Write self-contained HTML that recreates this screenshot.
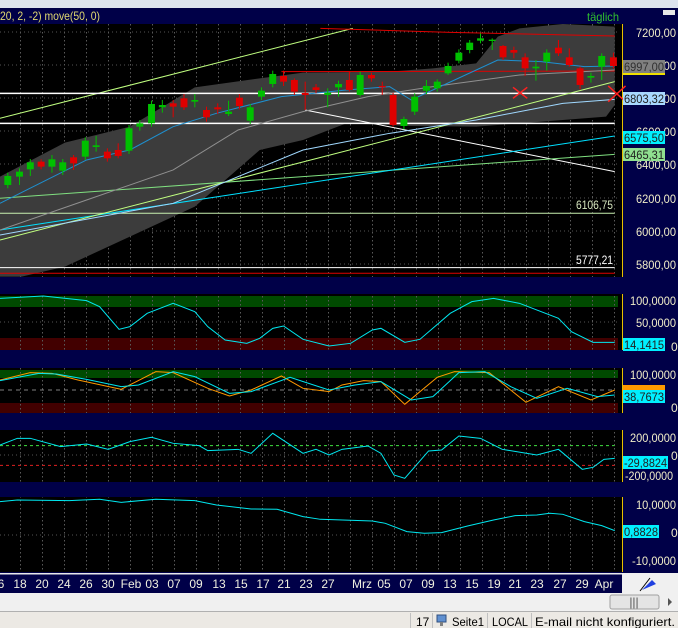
<!DOCTYPE html>
<html><head><meta charset="utf-8"><style>
html,body{margin:0;padding:0;width:678px;height:628px;overflow:hidden;background:#000048}
svg{display:block}
text{font-family:"Liberation Sans Narrow","Liberation Sans",sans-serif;font-size:12px}
</style></head><body>
<svg width="678" height="628" viewBox="0 0 678 628" xmlns="http://www.w3.org/2000/svg">
<defs>
<pattern id="vg" width="22" height="4" patternUnits="userSpaceOnUse" x="20"><rect x="0" y="0" width="1" height="1.5" fill="#5a5a5a"/></pattern>
</defs>
<rect x="0" y="0" width="678" height="8" fill="#dde4ee"/>
<rect x="0" y="8" width="678" height="565" fill="#000048"/>
<text x="0" y="20" fill="#e0d870" font-size="13" textLength="100" lengthAdjust="spacingAndGlyphs">20, 2, -2) move(50, 0)</text>
<text x="587" y="21" fill="#30c030" font-size="12" textLength="32" lengthAdjust="spacingAndGlyphs">täglich</text>
<rect x="663" y="10" width="12" height="5" fill="#e8e8e8"/>

<rect x="0" y="24" width="622" height="253" fill="#000"/>
<rect x="0" y="294" width="622" height="56" fill="#000"/>
<rect x="0" y="368" width="622" height="45" fill="#000"/>
<rect x="0" y="430" width="622" height="52" fill="#000"/>
<rect x="0" y="497" width="622" height="75" fill="#000"/>
<rect x="0" y="296" width="618" height="11" fill="#004a00"/>
<rect x="0" y="338" width="618" height="12" fill="#420000"/>
<rect x="0" y="370" width="618" height="8" fill="#004a00"/>
<rect x="0" y="403" width="618" height="10" fill="#420000"/>

<g stroke="#e8c000" stroke-width="1">
<line x1="622.5" y1="24" x2="622.5" y2="277"/>
<line x1="622.5" y1="294" x2="622.5" y2="350"/>
<line x1="622.5" y1="368" x2="622.5" y2="413"/>
<line x1="622.5" y1="430" x2="622.5" y2="482"/>
<line x1="622.5" y1="497" x2="622.5" y2="572"/>
</g>

<rect x="0" y="24" width="620" height="253" fill="url(#vg)"/>
<rect x="0" y="294" width="620" height="56" fill="url(#vg)"/>
<rect x="0" y="368" width="620" height="45" fill="url(#vg)"/>
<rect x="0" y="430" width="620" height="52" fill="url(#vg)"/>
<rect x="0" y="497" width="620" height="75" fill="url(#vg)"/>
<g stroke="#555" stroke-dasharray="1,3">
<line x1="0" y1="32" x2="620" y2="32"/><line x1="0" y1="65" x2="620" y2="65"/>
<line x1="0" y1="98" x2="620" y2="98"/><line x1="0" y1="131" x2="620" y2="131"/>
<line x1="0" y1="164" x2="620" y2="164"/><line x1="0" y1="198" x2="620" y2="198"/>
<line x1="0" y1="231" x2="620" y2="231"/><line x1="0" y1="264" x2="620" y2="264"/>
<line x1="0" y1="322" x2="620" y2="322"/>
<line x1="0" y1="455" x2="620" y2="455"/>
<line x1="0" y1="535" x2="620" y2="535"/>
</g>

<g transform="scale(0.4329,0.3333)" fill="none">
<polygon fill="#3c3c3c" points="0,530 150,428 300,380 450,262 600,235 700,218 900,215 1000,205 1100,190 1150,110 1200,85 1300,72 1420,80 1420,315 1400,350 1200,370 1100,380 950,378 800,370 700,420 600,450 450,620 300,710 150,800 50,830 0,830"/>
<g stroke-width="1">
<polyline vector-effect="non-scaling-stroke" stroke="#c0ff80" points="0,355 815,85"/>
<polyline vector-effect="non-scaling-stroke" stroke="#e00000" points="740,85 1040,97 1420,108"/>
<polyline vector-effect="non-scaling-stroke" stroke="#e00000" points="650,215 1420,213"/>
<polyline vector-effect="non-scaling-stroke" stroke="#ffffff" stroke-width="1.5" points="0,280 1420,280"/>
<polyline vector-effect="non-scaling-stroke" stroke="#ffffff" stroke-width="1.5" points="0,370 1420,370"/>
<polyline vector-effect="non-scaling-stroke" stroke="#ffffff" points="0,803 1420,803"/>
<polyline vector-effect="non-scaling-stroke" stroke="#e00000" points="0,820 1420,820"/>
<polyline vector-effect="non-scaling-stroke" stroke="#c8f0b0" points="0,640 1420,640"/>
<polyline vector-effect="non-scaling-stroke" stroke="#ffffff" points="705,330 1420,515"/>
<polyline vector-effect="non-scaling-stroke" stroke="#80e080" points="0,595 1420,463"/>
<polyline vector-effect="non-scaling-stroke" stroke="#00e0ff" points="0,690 1420,408"/>
<polyline vector-effect="non-scaling-stroke" stroke="#c0ff80" points="0,720 1420,245"/>
<polyline vector-effect="non-scaling-stroke" stroke="#a0d8ff" points="0,705 400,610 700,450 900,400 1100,360 1300,310 1420,298"/>
<polyline vector-effect="non-scaling-stroke" stroke="#909090" points="0,690 200,600 400,510 550,390 700,335 850,290 1000,260 1200,225 1420,210"/>
<polyline vector-effect="non-scaling-stroke" stroke="#1e90d0" points="0,610 200,480 300,450 400,380 500,340 650,290 800,270 900,260 950,300 1050,240 1150,180 1250,185 1350,200 1420,198"/>
<g stroke="#ff2020" stroke-width="1.5">
<polyline vector-effect="non-scaling-stroke" points="1185,262 1218,295"/><polyline vector-effect="non-scaling-stroke" points="1185,295 1218,262"/>
<polyline vector-effect="non-scaling-stroke" points="1405,258 1445,305"/><polyline vector-effect="non-scaling-stroke" points="1405,305 1445,258"/>
</g>
</g>
<g stroke-width="1">
<g stroke="#00c000">
<polyline vector-effect="non-scaling-stroke" points="18,518 18,565"/><polyline vector-effect="non-scaling-stroke" points="45,505 45,555"/><polyline vector-effect="non-scaling-stroke" points="70,477 70,528"/><polyline vector-effect="non-scaling-stroke" points="120,465 120,518"/><polyline vector-effect="non-scaling-stroke" points="145,477 145,525"/><polyline vector-effect="non-scaling-stroke" points="197,412 197,480"/><polyline vector-effect="non-scaling-stroke" points="222,408 222,455"/><polyline vector-effect="non-scaling-stroke" points="298,375 298,462"/><polyline vector-effect="non-scaling-stroke" points="323,360 323,392"/><polyline vector-effect="non-scaling-stroke" points="350,302 350,380"/><polyline vector-effect="non-scaling-stroke" points="375,300 375,338"/><polyline vector-effect="non-scaling-stroke" points="450,282 450,322"/><polyline vector-effect="non-scaling-stroke" points="528,302 528,348"/><polyline vector-effect="non-scaling-stroke" points="578,312 578,372"/><polyline vector-effect="non-scaling-stroke" points="604,262 604,300"/><polyline vector-effect="non-scaling-stroke" points="630,212 630,262"/><polyline vector-effect="non-scaling-stroke" points="757,265 757,322"/><polyline vector-effect="non-scaling-stroke" points="782,242 782,290"/><polyline vector-effect="non-scaling-stroke" points="832,215 832,290"/><polyline vector-effect="non-scaling-stroke" points="933,350 933,388"/><polyline vector-effect="non-scaling-stroke" points="958,280 958,345"/><polyline vector-effect="non-scaling-stroke" points="985,240 985,282"/><polyline vector-effect="non-scaling-stroke" points="1010,238 1010,275"/><polyline vector-effect="non-scaling-stroke" points="1035,188 1035,225"/><polyline vector-effect="non-scaling-stroke" points="1060,148 1060,190"/><polyline vector-effect="non-scaling-stroke" points="1085,120 1085,160"/><polyline vector-effect="non-scaling-stroke" points="1110,100 1110,130"/><polyline vector-effect="non-scaling-stroke" points="1137,115 1137,150"/><polyline vector-effect="non-scaling-stroke" points="1238,180 1238,242"/><polyline vector-effect="non-scaling-stroke" points="1263,148 1263,212"/><polyline vector-effect="non-scaling-stroke" points="1365,218 1365,248"/><polyline vector-effect="non-scaling-stroke" points="1390,160 1390,240"/>
</g>
<g stroke="#e00000">
<polyline vector-effect="non-scaling-stroke" points="95,478 95,508"/><polyline vector-effect="non-scaling-stroke" points="170,465 170,510"/><polyline vector-effect="non-scaling-stroke" points="248,445 248,485"/><polyline vector-effect="non-scaling-stroke" points="273,430 273,475"/><polyline vector-effect="non-scaling-stroke" points="400,300 400,352"/><polyline vector-effect="non-scaling-stroke" points="425,282 425,330"/><polyline vector-effect="non-scaling-stroke" points="477,320 477,365"/><polyline vector-effect="non-scaling-stroke" points="503,310 503,342"/><polyline vector-effect="non-scaling-stroke" points="553,282 553,328"/><polyline vector-effect="non-scaling-stroke" points="655,212 655,258"/><polyline vector-effect="non-scaling-stroke" points="680,235 680,285"/><polyline vector-effect="non-scaling-stroke" points="705,245 705,330"/><polyline vector-effect="non-scaling-stroke" points="730,252 730,280"/><polyline vector-effect="non-scaling-stroke" points="807,215 807,275"/><polyline vector-effect="non-scaling-stroke" points="858,218 858,245"/><polyline vector-effect="non-scaling-stroke" points="883,245 883,285"/><polyline vector-effect="non-scaling-stroke" points="908,278 908,380"/><polyline vector-effect="non-scaling-stroke" points="1162,135 1162,180"/><polyline vector-effect="non-scaling-stroke" points="1187,140 1187,175"/><polyline vector-effect="non-scaling-stroke" points="1213,160 1213,228"/><polyline vector-effect="non-scaling-stroke" points="1290,120 1290,168"/><polyline vector-effect="non-scaling-stroke" points="1315,145 1315,200"/><polyline vector-effect="non-scaling-stroke" points="1340,200 1340,268"/><polyline vector-effect="non-scaling-stroke" points="1417,158 1417,205"/>
</g>
</g>
<g fill="#00c000">
<rect x="10" y="528" width="16" height="27"/><rect x="37" y="515" width="16" height="15"/><rect x="62" y="487" width="16" height="21"/><rect x="112" y="478" width="16" height="22"/><rect x="137" y="487" width="16" height="25"/><rect x="189" y="422" width="16" height="48"/><rect x="214" y="436" width="16" height="5"/><rect x="290" y="385" width="16" height="67"/><rect x="315" y="370" width="16" height="10"/><rect x="342" y="312" width="16" height="58"/><rect x="367" y="315" width="16" height="7"/><rect x="442" y="300" width="16" height="5"/><rect x="520" y="335" width="16" height="7"/><rect x="570" y="322" width="16" height="40"/><rect x="596" y="272" width="16" height="18"/><rect x="622" y="222" width="16" height="30"/><rect x="749" y="278" width="16" height="7"/><rect x="774" y="252" width="16" height="10"/><rect x="824" y="225" width="16" height="60"/><rect x="925" y="357" width="16" height="21"/><rect x="950" y="290" width="16" height="45"/><rect x="977" y="258" width="16" height="14"/><rect x="1002" y="245" width="16" height="20"/><rect x="1027" y="198" width="16" height="22"/><rect x="1052" y="158" width="16" height="24"/><rect x="1077" y="128" width="16" height="22"/><rect x="1102" y="115" width="16" height="7"/><rect x="1129" y="119" width="16" height="4"/><rect x="1230" y="200" width="16" height="5"/><rect x="1255" y="158" width="16" height="27"/><rect x="1357" y="228" width="16" height="5"/><rect x="1382" y="168" width="16" height="32"/>
</g>
<g fill="#e00000">
<rect x="87" y="485" width="16" height="15"/><rect x="162" y="472" width="16" height="18"/><rect x="240" y="455" width="16" height="20"/><rect x="265" y="450" width="16" height="18"/><rect x="392" y="310" width="16" height="10"/><rect x="417" y="295" width="16" height="27"/><rect x="469" y="330" width="16" height="22"/><rect x="495" y="322" width="16" height="6"/><rect x="545" y="293" width="16" height="25"/><rect x="647" y="228" width="16" height="17"/><rect x="672" y="240" width="16" height="35"/><rect x="697" y="279" width="16" height="6"/><rect x="722" y="262" width="16" height="8"/><rect x="799" y="240" width="16" height="30"/><rect x="850" y="225" width="16" height="10"/><rect x="875" y="258" width="16" height="4"/><rect x="900" y="285" width="16" height="90"/><rect x="1154" y="138" width="16" height="34"/><rect x="1179" y="150" width="16" height="8"/><rect x="1205" y="172" width="16" height="33"/><rect x="1282" y="143" width="16" height="17"/><rect x="1307" y="172" width="16" height="23"/><rect x="1332" y="205" width="16" height="50"/><rect x="1409" y="172" width="16" height="26"/>
</g>
</g>
<text x="576" y="209" fill="#d8e8c0" textLength="37" lengthAdjust="spacingAndGlyphs">6106,75</text>
<text x="576" y="264" fill="#ffffff" textLength="37" lengthAdjust="spacingAndGlyphs">5777,21</text>

<g transform="translate(0,290) scale(0.4329,0.3333)" fill="none" stroke-width="1">
<polyline vector-effect="non-scaling-stroke" stroke="#00e8f0" points="0,25 100,18 200,32 230,50 275,118 300,110 340,70 400,40 450,65 480,110 520,150 570,160 600,145 630,115 655,108 700,148 760,168 810,160 860,120 880,115 935,157 970,148 1040,70 1090,35 1140,25 1200,40 1290,85 1320,125 1370,157 1420,157"/>
<polyline vector-effect="non-scaling-stroke" stroke="#808080" stroke-dasharray="4,4" points="0,300 1420,300"/>
<polyline vector-effect="non-scaling-stroke" stroke="#ff9900" points="0,270 70,248 120,250 180,270 280,298 360,245 400,248 480,295 530,318 580,300 650,258 700,295 760,305 790,285 840,272 880,275 935,343 1010,262 1050,245 1130,248 1215,337 1290,290 1365,330 1420,300"/>
<polyline vector-effect="non-scaling-stroke" stroke="#00e8f0" points="0,272 90,250 130,252 200,268 280,290 320,285 400,245 450,260 530,310 580,305 670,262 760,300 820,285 880,275 950,330 1000,320 1060,248 1120,245 1180,290 1240,325 1310,295 1380,320 1420,315"/>
<polyline vector-effect="non-scaling-stroke" stroke="#40e040" stroke-dasharray="3,3" points="0,467 1420,467"/>
<polyline vector-effect="non-scaling-stroke" stroke="#e02020" stroke-dasharray="3,3" points="0,526 1420,526"/>
<polyline vector-effect="non-scaling-stroke" stroke="#00e8f0" points="0,465 40,445 70,445 140,470 200,462 250,478 300,455 350,442 400,460 460,467 480,482 550,478 580,490 630,430 700,490 730,478 760,495 790,478 850,468 880,490 910,555 935,565 990,483 1020,480 1060,438 1110,445 1160,478 1240,495 1290,478 1345,538 1370,532 1395,508 1420,505"/>
<polyline vector-effect="non-scaling-stroke" stroke="#00e8f0" points="0,635 40,630 160,632 230,628 280,637 360,628 450,632 500,645 580,657 640,658 700,680 740,688 860,693 890,700 940,725 980,730 1020,728 1080,708 1140,690 1190,677 1240,675 1270,670 1300,673 1350,695 1390,707 1420,722"/>
</g>

<g fill="#f0ecc8" font-size="13">
<text x="636" y="37" textLength="40" lengthAdjust="spacingAndGlyphs">7200,00</text>
<text x="636" y="70" textLength="40" lengthAdjust="spacingAndGlyphs">7000,00</text>
<text x="636" y="103" textLength="40" lengthAdjust="spacingAndGlyphs">6800,00</text>
<text x="636" y="136" textLength="40" lengthAdjust="spacingAndGlyphs">6600,00</text>
<text x="636" y="169" textLength="40" lengthAdjust="spacingAndGlyphs">6400,00</text>
<text x="636" y="203" textLength="40" lengthAdjust="spacingAndGlyphs">6200,00</text>
<text x="636" y="236" textLength="40" lengthAdjust="spacingAndGlyphs">6000,00</text>
<text x="636" y="269" textLength="40" lengthAdjust="spacingAndGlyphs">5800,00</text>
<text x="630" y="305" textLength="46" lengthAdjust="spacingAndGlyphs">100,0000</text>
<text x="636" y="327" textLength="40" lengthAdjust="spacingAndGlyphs">50,0000</text>
<text x="671" y="351">0</text>
<text x="630" y="379" textLength="46" lengthAdjust="spacingAndGlyphs">100,0000</text>
<text x="671" y="412">0</text>
<text x="630" y="442" textLength="46" lengthAdjust="spacingAndGlyphs">200,0000</text>
<text x="671" y="460">0</text>
<text x="625" y="480" textLength="48" lengthAdjust="spacingAndGlyphs">-200,0000</text>
<text x="636" y="509" textLength="40" lengthAdjust="spacingAndGlyphs">10,0000</text>
<text x="671" y="537">0</text>
<text x="632" y="565" textLength="44" lengthAdjust="spacingAndGlyphs">-10,0000</text>
</g>
<g font-size="13">
<rect x="623" y="60" width="42" height="13" fill="#808080"/><rect x="623" y="73" width="42" height="2" fill="#f0e000"/>
<text x="624" y="71" fill="#303030" textLength="40" lengthAdjust="spacingAndGlyphs">6997,00</text>
<rect x="623" y="92" width="42" height="13" fill="#a8d8ff"/><text x="624" y="103" fill="#202020" textLength="40" lengthAdjust="spacingAndGlyphs">6803,32</text>
<rect x="623" y="131" width="42" height="13" fill="#00f0ff"/><text x="624" y="142" fill="#202020" textLength="40" lengthAdjust="spacingAndGlyphs">6575,50</text>
<rect x="623" y="148" width="42" height="13" fill="#90e090"/><text x="624" y="159" fill="#202020" textLength="40" lengthAdjust="spacingAndGlyphs">6465,31</text>
<rect x="623" y="338" width="42" height="13" fill="#00f0ff"/><text x="624" y="349" fill="#202020" textLength="40" lengthAdjust="spacingAndGlyphs">14,1415</text>
<rect x="623" y="385" width="42" height="6" fill="#ff9900"/>
<rect x="623" y="390" width="42" height="13" fill="#00f0ff"/><text x="624" y="401" fill="#202020" textLength="40" lengthAdjust="spacingAndGlyphs">38,7673</text>
<rect x="623" y="456" width="45" height="13" fill="#00f0ff"/><text x="624" y="467" fill="#202020" textLength="43" lengthAdjust="spacingAndGlyphs">-29,8824</text>
<rect x="623" y="525" width="36" height="13" fill="#00f0ff"/><text x="624" y="536" fill="#202020" textLength="34" lengthAdjust="spacingAndGlyphs">0,8828</text>
</g>

<rect x="0" y="573" width="622" height="1.5" fill="#e8e8e8"/>
<rect x="622" y="573" width="56" height="20" fill="#f0f0f0"/>
<path d="M642 590 L652 580 L656 584 Z" fill="#2040e0"/><path d="M640 591 L650 578" stroke="#000" stroke-width="1"/>
<g fill="#f0f0e0" text-anchor="middle" font-size="13">
<text x="1" y="588">6</text><text x="20" y="588">18</text><text x="42" y="588">20</text><text x="64" y="588">24</text><text x="86" y="588">26</text><text x="108" y="588">30</text><text x="131" y="588">Feb</text><text x="152" y="588">03</text><text x="174" y="588">07</text><text x="196" y="588">09</text><text x="219" y="588">13</text><text x="241" y="588">15</text><text x="263" y="588">17</text><text x="284" y="588">21</text><text x="306" y="588">23</text><text x="328" y="588">27</text><text x="362" y="588">Mrz</text><text x="384" y="588">05</text><text x="406" y="588">07</text><text x="428" y="588">09</text><text x="450" y="588">13</text><text x="472" y="588">15</text><text x="494" y="588">19</text><text x="515" y="588">21</text><text x="537" y="588">23</text><text x="560" y="588">27</text><text x="582" y="588">29</text><text x="604" y="588">Apr</text>
</g>
<rect x="0" y="593" width="678" height="18" fill="#f0f0f0"/>
<rect x="610" y="595" width="49" height="14" fill="#e4e4e4" stroke="#a0a0a0" rx="2"/>
<text x="634" y="606" fill="#555" text-anchor="middle" font-size="9">|||</text>
<path d="M668 598 L672 602 L668 606 Z" fill="#555"/>
<rect x="0" y="611" width="678" height="17" fill="#ece9e4"/>
<rect x="0" y="611" width="678" height="1" fill="#b0b0b0"/>
<g stroke="#c0c0c0"><line x1="410.5" y1="613" x2="410.5" y2="628"/><line x1="432.5" y1="613" x2="432.5" y2="628"/><line x1="487.5" y1="613" x2="487.5" y2="628"/><line x1="531.5" y1="613" x2="531.5" y2="628"/></g>
<text x="416" y="626" fill="#000">17</text>
<rect x="437" y="615" width="9" height="7" fill="#6090d0" stroke="#305080"/><rect x="440" y="622" width="3" height="4" fill="#808080"/>
<text x="452" y="626" fill="#000" textLength="32" lengthAdjust="spacingAndGlyphs">Seite1</text>
<text x="492" y="626" fill="#000" textLength="36" lengthAdjust="spacingAndGlyphs">LOCAL</text>
<text x="535" y="626" fill="#000" textLength="140" lengthAdjust="spacingAndGlyphs">E-mail nicht konfiguriert.</text>
</svg>
</body></html>
